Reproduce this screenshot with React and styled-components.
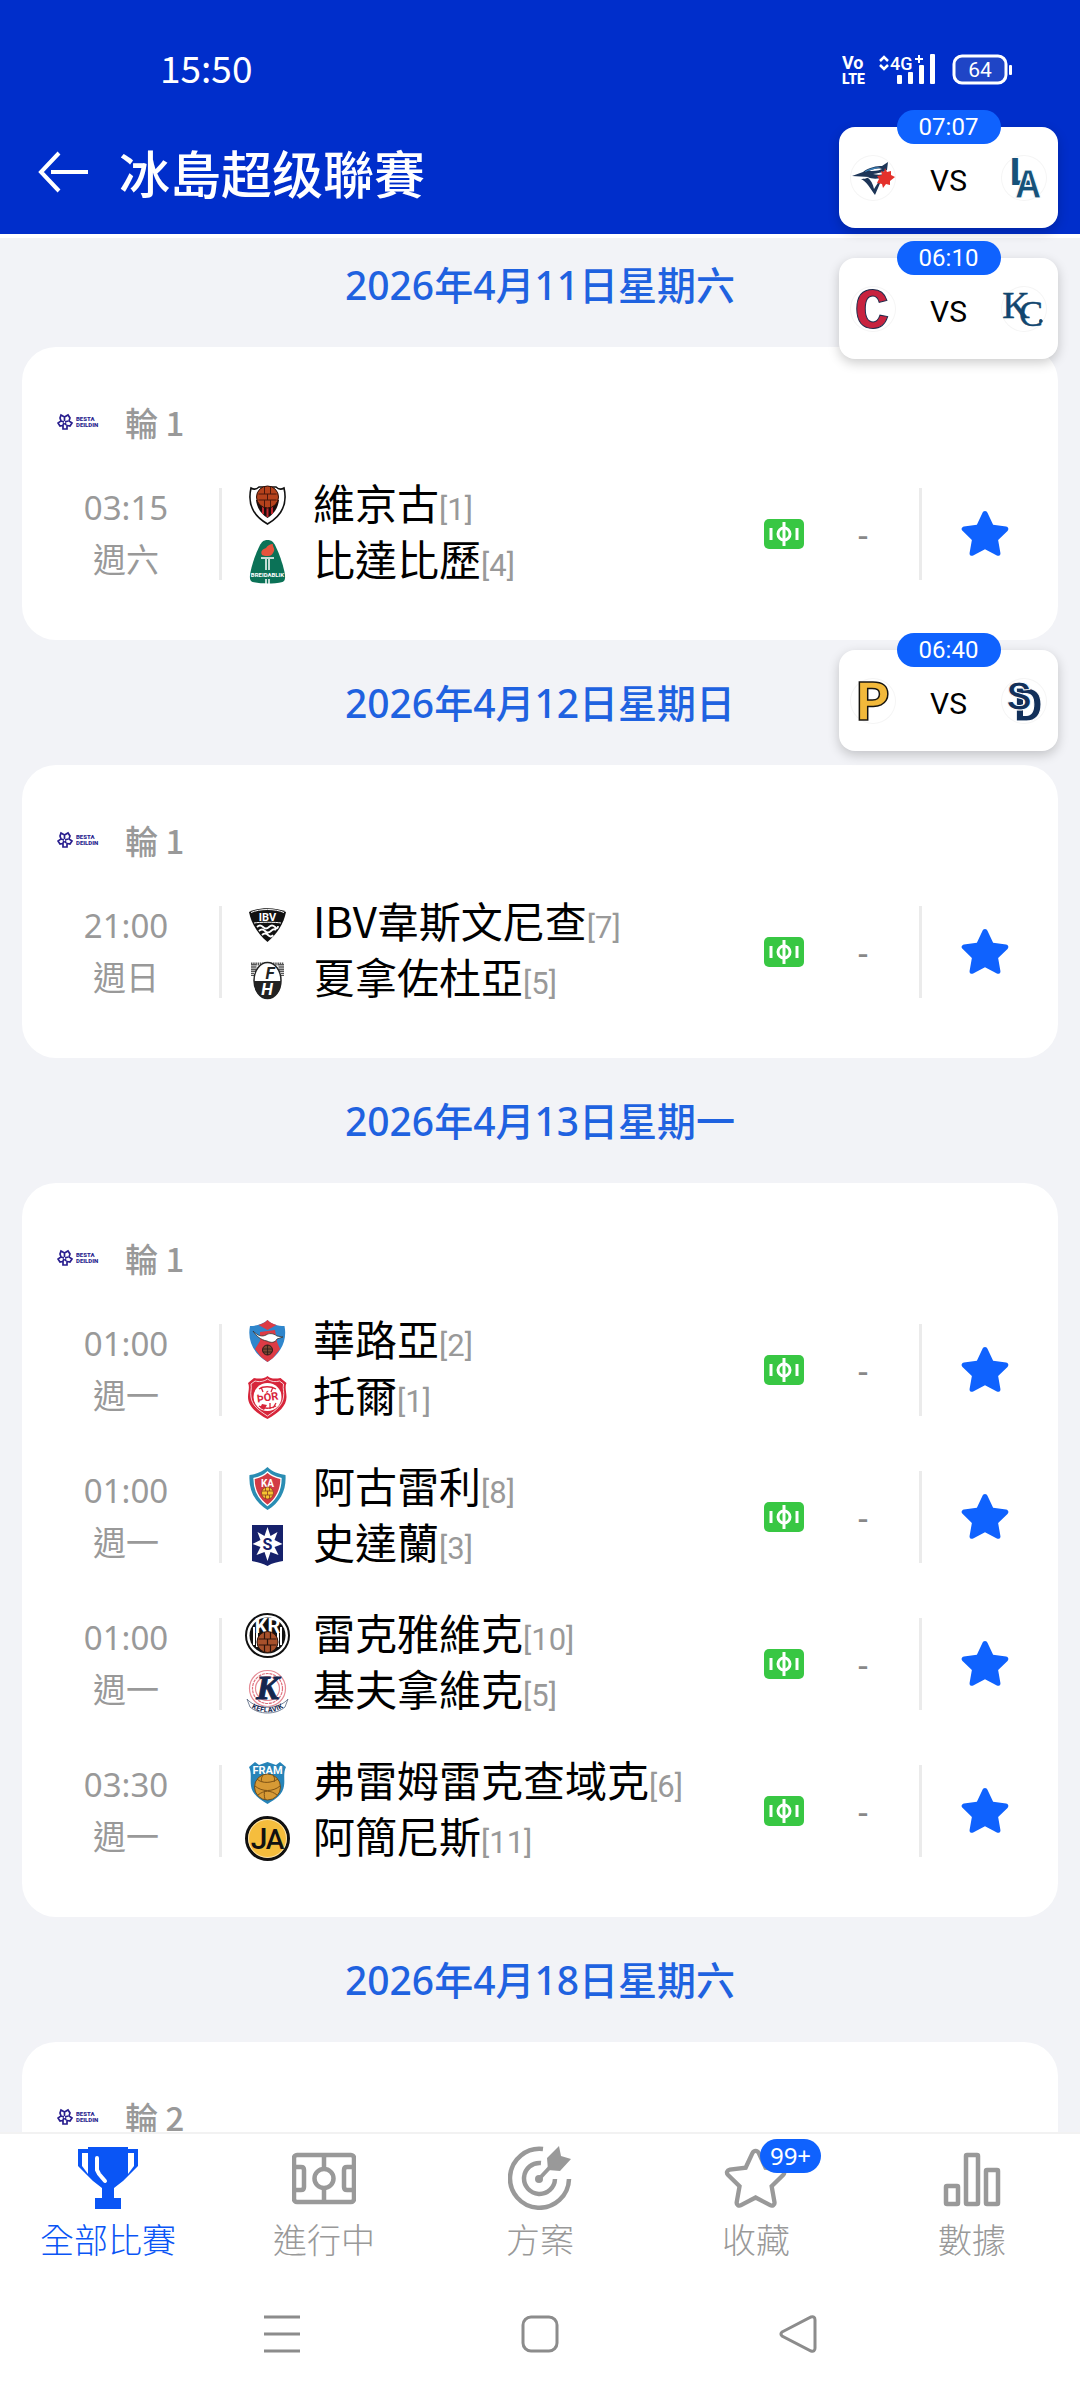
import React from "react";
import styled, { createGlobalStyle } from "styled-components";

const BALL_PANELS = "M-9 -3H9M-9 3H9M-3 -10V-3M3 -10V-3M0 -3V3M-3 3V10M3 3V10";

const crests = {
  vikingur: (
    <>
      <path d="M6 5c3 2 6 1 8-1h17c2 2 5 3 8 1 3 13 1 26-16.500 36C5 31 3 18 6 5z" fill="#fff" stroke="#111" strokeWidth="1.600" />
      <path d="M11 17h23c-1 8-5 14-11.500 18C16 31 12 25 11 17z" fill="#1a0d0d" />
      <path d="M18 20v11M22.500 20v14M27 20v11" stroke="#c0272d" strokeWidth="2" />
      <circle cx="22.500" cy="14" r="11" fill="#b5421c" stroke="#2b0f08" strokeWidth="1" />
      <path d={BALL_PANELS} transform="translate(22.5 14)" fill="none" stroke="#4a170b" strokeWidth="1" />
    </>
  ),
  breidablik: (
    <>
      <path d="M22.500 1c4 0 6 2 8 6 4 8 7 17 9 26 1 5 1 9-2 10-9 2-21 2-30 0-3-1-3-5-2-10 2-9 5-18 9-26 2-4 4-6 8-6z" fill="#0b7257" />
      <path d="M17 16c-2-4 1-6 4-7 1-2 4-4 7-4-1 2 2 4 1 7-1 3-3 5-6 5-2 0-4 0-6-1z" fill="#e5533d" />
      <path d="M16 19h13M21 20v11M24 20v11M21 40v5M24 40v5" stroke="#fff" strokeWidth="1.500" />
      <text x="22.500" y="38" textAnchor="middle" fontSize="6" fontWeight="700" fill="#fff">BREIDABLIK</text>
    </>
  ),
  ibv: (
    <>
      <path d="M4 11c10-5 27-5 37 0-2 11-9 22-18.500 30C13 33 6 22 4 11z" fill="#111" />
      <path d="M6 11.500c9-4 24-4 33 0M9 22c5-1 22-1 27 0" fill="none" stroke="#fff" strokeWidth="1" />
      <text x="22.500" y="19.500" textAnchor="middle" fontSize="11" fontWeight="700" fill="#fff">IBV</text>
      <path d="M12 26q3-3 6 0t6 0 6 0 3-1M14 30q3-3 6 0t6 0 5-1M17 34q3-3 6 0t5 0" fill="none" stroke="#fff" strokeWidth="1.800" />
    </>
  ),
  fh: (
    <>
      <path d="M6 7h33M7.500 7v12M37.500 7v12M10 7v8M35 7v8" stroke="#555" strokeWidth="3" strokeDasharray="1.500 0.700" />
      <ellipse cx="22.500" cy="23.500" rx="13.500" ry="18" fill="#fff" stroke="#222" strokeWidth="1.500" />
      <path d="M9 24h27c0 10-6 17.500-13.500 17.500S9 34 9 24z" fill="#222" />
      <text x="25" y="22" textAnchor="middle" fontSize="17" fontWeight="700" fontStyle="italic" fill="#222">F</text>
      <text x="22" y="38" textAnchor="middle" fontSize="17" fontWeight="700" fontStyle="italic" fill="#fff">H</text>
    </>
  ),
  valur: (
    <>
      <path d="M22.500 1c4 4 10 6 17 6 3 15-4 28-17 36C9 35 2 22 5 7c7 0 13-2 17.500-6z" fill="#2f86cc" />
      <path d="M22.500 1c3 3 6 4 9 5l-9 5-9-5c3-1 6-2 9-5zM15 13l15-2 2 12 3 7-7 9-5.500 4L16 38l-6-8 5-8z" fill="#dd3b45" />
      <path d="M8 12c5 5 9 6 13 4 3-2 7-2 11 1l6 1-6 2c-2 4-6 4-10 2-6-1-11-5-14-10z" fill="#fff" stroke="#333" strokeWidth="0.800" />
      <circle cx="22.500" cy="31" r="5" fill="#7b4a32" stroke="#2c1a1a" strokeWidth="1" />
      <path d="M18 30h9M18 33h9M22.500 26v10" stroke="#2c1a1a" strokeWidth="0.800" />
    </>
  ),
  thor: (
    <>
      <path d="M22.500 1c3 3 8 3 13 2l6 5c-2 4 0 9 0 14 0 9-8 16-19 22C11 38 3 31 3 22c0-5 2-10 0-14l6-5c5 1 10 1 13.500-2z" fill="#d7253a" />
      <path d="M22.500 4c4 3 8 3 12 2l4 3c-1 5 1 8 0 13-1 8-7 13-16 19C13 35 7 30 6 22c-1-5 1-8 0-13l4-3c4 1 8 1 12.500-2z" fill="none" stroke="#fff" strokeWidth="0.800" />
      <circle cx="22.500" cy="22" r="14" fill="#fff" />
      <path d="M14 14c4-3 12-3 17 0M16 12l2 5M28 12l-2 5M14 31c4 3 12 3 17 0M25 28v6M31 28l-3 5" fill="none" stroke="#d7253a" strokeWidth="1.300" />
      <text x="22.500" y="26" textAnchor="middle" fontSize="11" fontWeight="700" fill="#d7253a" transform="rotate(-8 22.5 22)">ÞÓR</text>
      <path d="M17 29l5 1-3 5-4-2z" fill="#d7253a" />
    </>
  ),
  ka: (
    <>
      <path d="M22.500 1c5 5 11 7 18 8 1 15-5 27-18 35C9.500 36 3.500 24 4.500 9c7-1 13-3 18-8z" fill="#2a8db3" />
      <path d="M22.500 6c4 4 9 5.500 13.500 6.500 0 12-4 20-13.500 27C13 32.500 9 24.500 9 12.500 13.500 11.500 18.500 10 22.500 6z" fill="#d23b45" stroke="#fff" strokeWidth="1.300" />
      <text x="22.500" y="20.500" textAnchor="middle" fontSize="10" fontWeight="700" fill="#fff">KA</text>
      <circle cx="22.500" cy="27" r="6" fill="#f6c531" stroke="#8c3d20" strokeWidth="0.800" />
      <path d="M17 25h11M17 29h11M20.500 21v4M24.500 21v4M22.500 25v4M20.500 29v4M24.500 29v4" stroke="#8c3d20" strokeWidth="0.800" />
    </>
  ),
  stjarnan: (
    <>
      <path d="M7 3h31v36c-5 1-11 2-15.500 5C18 41 12 40 7 39z" fill="#16216b" />
      <path d="M22.500 5l3 9 7-4-3 8 8 4-8 3 4 8-8-3-3 9-3-9-8 3 4-8-8-3 8-4-3-8 7 4z" fill="#fff" />
      <text x="22.500" y="28" textAnchor="middle" fontSize="16" fontWeight="700" fill="#16216b">S</text>
    </>
  ),
  kr: (
    <>
      <circle cx="22.500" cy="22.500" r="21.500" fill="#fff" stroke="#111" strokeWidth="2" />
      <circle cx="22.500" cy="22.500" r="18" fill="#111" />
      <path d="M9 14v18M36 14v18M12 20v14M33 20v14" stroke="#fff" strokeWidth="2" />
      <text x="22.500" y="20" textAnchor="middle" fontSize="20" fontWeight="700" fill="#fff">KR</text>
      <circle cx="22.500" cy="29" r="10.500" fill="#a8512b" stroke="#2c130a" strokeWidth="1" />
      <path d={BALL_PANELS} transform="translate(22.5 29)" fill="none" stroke="#2c130a" strokeWidth="1.200" />
    </>
  ),
  keflavik: (
    <>
      <circle cx="22.500" cy="19.500" r="18" fill="#fff" stroke="#e58b95" strokeWidth="1.200" />
      <circle cx="22.500" cy="19.500" r="15" fill="none" stroke="#e0707d" strokeWidth="1.200" strokeDasharray="3 0.800" />
      <circle cx="22.500" cy="19.500" r="12" fill="none" stroke="#e58b95" strokeWidth="1.200" />
      <text x="22.500" y="30" textAnchor="middle" fontFamily="Liberation Serif" fontSize="34" fontWeight="700" fontStyle="italic" fill="#14274f" stroke="#14274f">K</text>
      <path id="kefBand" d="M3 33c10 11 29 11 39 0" fill="none" stroke="#fff" strokeWidth="7" />
      <path d="M2 30c9 11 32 11 41 0M5 38c9 8 26 8 35 0M2 30l3 8M43 30l-3 8" fill="none" stroke="#56647f" strokeWidth="0.800" />
      <text fontSize="7" fontWeight="700" fill="#14274f">
        <textPath href="#kefBand" startOffset="50%" textAnchor="middle" dominantBaseline="central">KEFLAVIK</textPath>
      </text>
    </>
  ),
  fram: (
    <>
      <path d="M4 7l6-5 4 3 8.500-3L31 5l4-3 6 5c-3 6-1 12-2 19-1 8-8 13-16.500 18C14 39 7 34 6 26 5 19 7 13 4 7z" fill="#2784b8" />
      <text x="22.500" y="14" textAnchor="middle" fontSize="11" fontWeight="700" fill="#fff">FRAM</text>
      <circle cx="22.500" cy="27" r="13" fill="#d79a35" stroke="#5e3c10" strokeWidth="0.800" />
      <path d="M12 19c5 5 15 4 21 0M10 26c7 6 18 6 25 0M13 35c6-5 13-5 19 0M18 15c-2 3-2 5-1 7M28 15c2 3 2 5 1 7M20 30c-1 3-1 6 0 9" fill="none" stroke="#7d5215" strokeWidth="1" />
    </>
  ),
  akranes: (
    <>
      <circle cx="22.500" cy="22.500" r="21" fill="#f5bd3d" stroke="#111" strokeWidth="3" />
      <circle cx="22.500" cy="22.500" r="19" fill="none" stroke="#fff" strokeWidth="0.600" />
      <text x="14" y="33" textAnchor="middle" fontSize="30" fontWeight="500" fill="#111">J</text>
      <text x="30" y="33" textAnchor="middle" fontSize="28" fontWeight="500" fill="#111">A</text>
    </>
  ),
};

const clubs = {
  jays: (
    <>
      <path d="M1 20l11-4c6-5 14-6 19-6l6-4-1 8c-5 3-9 3-14 4 4 1 8 1 11 0l-3 7c-2 5-4 9-6 14-5-7-8-13-14-16 3 0 7-1 8-2L1 20z" fill="#1d3557" />
      <path d="M18 15c4-2 8-3 13-2-4 2-9 2-13 2zM16 21c5 2 9 2 14 1l-7 11c-1-5-3-9-7-12z" fill="#fff" />
      <path d="M13 16c5-4 12-5 17-5-5 2-11 3-17 5z" fill="#3c82b8" />
      <path d="M34 12l2 4 4-1v4l4 2-5 4v4l-4-1-3 4-1-4-5-1 2-4-2-3 5-1-1-4 3 1z" fill="#e4312b" />
    </>
  ),
  dodgers: (
    <g fill="#17527a" stroke="#17527a" fontFamily="Liberation Mono" fontWeight="700">
      <text x="18" y="29" textAnchor="middle" fontSize="40" strokeWidth="0">L</text>
      <text x="26" y="42" textAnchor="middle" fontSize="42" stroke="#fff" strokeWidth="1">A</text>
    </g>
  ),
  guardians: (
    <text x="21" y="41" textAnchor="middle" fontFamily="Liberation Mono" fontSize="58" fontWeight="700" fill="#c8233f" stroke="#1b2c4c" strokeWidth="1">C</text>
  ),
  royals: (
    <g fill="#12466f" stroke="#12466f" strokeWidth="0.500" fontFamily="Liberation Serif">
      <text x="14" y="31" textAnchor="middle" fontSize="38">K</text>
      <text x="29" y="39" textAnchor="middle" fontSize="36">C</text>
      <circle cx="39" cy="34" r="1.500" />
    </g>
  ),
  pirates: (
    <text x="22" y="41" textAnchor="middle" fontFamily="Liberation Mono" fontSize="58" fontWeight="700" fill="#f2b93b" stroke="#15130f" strokeWidth="1.500">P</text>
  ),
  padres: (
    <g fill="#12305a" fontFamily="Liberation Mono" fontWeight="700">
      <text x="26" y="42" textAnchor="middle" fontSize="50" stroke="#fff" strokeWidth="1">D</text>
      <text x="17" y="31" textAnchor="middle" fontSize="42" stroke="#fff" strokeWidth="1">S</text>
    </g>
  ),
};

const STAR = "M12 1.500c.6 0 1 .4 1.300 1l2.600 5.600 6.200.8c1.100.2 1.500 1.300.7 2.100l-4.500 4.400 1.100 6.200c.2 1.100-.8 1.700-1.700 1.200L12 19.800l-5.700 3c-.9.500-1.900-.1-1.700-1.200l1.100-6.200-4.500-4.400c-.8-.8-.4-1.900.7-2.100l6.200-.8 2.600-5.600c.3-.6.7-1 1.300-1z";

const tabs = [
  {
    label: "全部比賽",
    active: true,
    icon: (
      <>
        <path d="M12 1h40v2h10v17L47 35l-9 7v10h7v11H19V52h7V42l-9-7L2 20V3h10z" fill="currentColor" />
        <path d="M6 7h6v21l-6-8zM52 7h6v13l-6 8z" fill="#fff" />
        <path d="M21 12v12l2 4 6 7" fill="none" stroke="#fff" strokeWidth="4" strokeLinecap="round" />
      </>
    ),
  },
  {
    label: "進行中",
    icon: (
      <g fill="none" stroke="currentColor" strokeWidth="4.500">
        <rect x="2" y="9" width="60" height="47" rx="3" />
        <path d="M32 9v14M32 42v14M4 21h5q3 0 3 3v17q0 3-3 3H4M60 21h-5q-3 0-3 3v17q0 3 3 3h5" />
        <circle cx="32" cy="32.500" r="9.500" />
      </g>
    ),
  },
  {
    label: "方案",
    icon: (
      <>
        <path d="M35 3A29.500 29.500 0 1 0 61 33M33 17A15.500 15.500 0 1 0 47 33" fill="none" stroke="currentColor" strokeWidth="4.500" />
        <circle cx="31" cy="33" r="4" fill="currentColor" />
        <path d="M31 33l13-14" stroke="currentColor" strokeWidth="4" />
        <path d="M39 12L51 0l2 10 10 3-11 12-12-1z" fill="currentColor" />
      </>
    ),
  },
  {
    label: "收藏",
    badge: "99+",
    icon: <path d={STAR} transform="translate(1 1) scale(2.550)" fill="none" stroke="currentColor" strokeWidth="1.700" />,
  },
  {
    label: "數據",
    icon: (
      <g fill="none" stroke="currentColor" strokeWidth="4.500">
        <rect x="6" y="40" width="12" height="18" rx="1" />
        <rect x="26" y="9" width="12" height="49" rx="1" />
        <rect x="46" y="24" width="12" height="34" rx="1" />
      </g>
    ),
  },
];

const days = [
  {
    date: "2026年4月11日星期六",
    round: "輪 1",
    matches: [
      { time: "03:15", day: "週六", home: ["vikingur", "維京古", 1], away: ["breidablik", "比達比歷", 4] },
    ],
  },
  {
    date: "2026年4月12日星期日",
    round: "輪 1",
    matches: [
      { time: "21:00", day: "週日", home: ["ibv", "IBV韋斯文尼查", 7], away: ["fh", "夏拿佐杜亞", 5] },
    ],
  },
  {
    date: "2026年4月13日星期一",
    round: "輪 1",
    matches: [
      { time: "01:00", day: "週一", home: ["valur", "華路亞", 2], away: ["thor", "托爾", 1] },
      { time: "01:00", day: "週一", home: ["ka", "阿古雷利", 8], away: ["stjarnan", "史達蘭", 3] },
      { time: "01:00", day: "週一", home: ["kr", "雷克雅維克", 10], away: ["keflavik", "基夫拿維克", 5] },
      { time: "03:30", day: "週一", home: ["fram", "弗雷姆雷克查域克", 6], away: ["akranes", "阿簡尼斯", 11] },
    ],
  },
  { date: "2026年4月18日星期六", round: "輪 2", matches: [] },
];

const pinned = [
  { time: "07:07", home: "jays", away: "dodgers", top: 110 },
  { time: "06:10", home: "guardians", away: "royals", top: 241 },
  { time: "06:40", home: "pirates", away: "padres", top: 633 },
];

const LeagueLogo = () => (
  <svg width="46" height="18" viewBox="0 0 46 18" aria-hidden="true">
    <g fill="none" stroke="#2a1f8f" strokeWidth="1.700">
      <path d="M4 2l3.500 2L11 2l2 3-1 3 3 2-2 3-3-.500V16H6v-3.500L3 13l-2-3 3-2-1-3zM7.500 4v4M4 8l3 1M11 8L8 9M6 12l1-2M9 12L8 10" />
    </g>
    <text x="19" y="8" fontSize="6" fontWeight="900" fill="#2a1f8f">BESTA</text>
    <text x="19" y="14" fontSize="6" fontWeight="900" fill="#2a1f8f">DEILDIN</text>
  </svg>
);

const Team = ({ team: [crest, name, rank] }) => (
  <TeamLine>
    <svg width="45" height="45" viewBox="0 0 45 45" aria-hidden="true">{crests[crest]}</svg>
    <TeamName>
      {name}
      <Rank>[{rank}]</Rank>
    </TeamName>
  </TeamLine>
);

const Match = ({ match }) => (
  <MatchRow>
    <Kickoff>
      <span>{match.time}</span>
      <span>{match.day}</span>
    </Kickoff>
    <Divider />
    <Teams>
      <Team team={match.home} />
      <Team team={match.away} />
    </Teams>
    <svg width="40" height="30" viewBox="0 0 40 30" aria-hidden="true">
      <rect width="40" height="30" rx="5" fill="#38c743" />
      <g fill="none" stroke="#fff" strokeWidth="3">
        <path d="M7 9v12M33 9v12M20 3v24" />
        <circle cx="20" cy="15" r="6" />
      </g>
    </svg>
    <Score>-</Score>
    <Divider />
    <StarButton type="button" aria-label="收藏">
      <svg width="50" height="50" viewBox="0 0.500 24 24"><path d={STAR} fill="#0f62fe" /></svg>
    </StarButton>
  </MatchRow>
);

const App = () => {
  return (
    <>
      <GlobalStyle />
      <Screen>
        <Header>
          <StatusBar>
            <Clock>15:50</Clock>
            <svg width="170" height="34" viewBox="0 0 170 34" aria-hidden="true">
              <g fill="#fff" fontFamily="Roboto">
                <text x="0" y="16" fontSize="18" fontWeight="700">Vo</text>
                <text x="0" y="31" fontSize="14" fontWeight="900">LTE</text>
                <text x="48" y="17" fontSize="18" fontWeight="500">4G</text>
                <path d="M77 2v8M73 6h8" stroke="#fff" strokeWidth="2" />
                <path d="M38 8l4-4 4 4M38 12l4 4 4-4" fill="none" stroke="#fff" strokeWidth="2.500" />
                <rect x="55" y="22" width="5" height="9" rx="1" />
                <rect x="66" y="19" width="5" height="12" rx="1" />
                <rect x="77" y="12" width="5" height="19" rx="1" />
                <rect x="88" y="1" width="5" height="30" rx="1" />
                <rect x="112" y="3" width="52" height="27" rx="8" fill="#1f45c6" stroke="#fff" strokeWidth="3" />
                <rect x="167" y="12" width="3" height="10" rx="1" />
                <text x="138" y="24" textAnchor="middle" fontSize="21">64</text>
              </g>
            </svg>
          </StatusBar>
          <TitleBar>
            <BackButton type="button" aria-label="返回">
              <svg width="52" height="42" viewBox="0 0 52 42" fill="none" stroke="#fff" strokeWidth="4">
                <path d="M22 2L4 21l18 19M14 21h37" />
              </svg>
            </BackButton>
            <Title>冰島超级聯賽</Title>
          </TitleBar>
        </Header>

        <MatchList>
          {days.map((day) => (
            <section key={day.date}>
              <DateHeading>{day.date}</DateHeading>
              <Card>
                <Round>
                  <LeagueLogo />
                  {day.round}
                </Round>
                {day.matches.map((match) => (
                  <Match key={match.home[0]} match={match} />
                ))}
              </Card>
            </section>
          ))}
        </MatchList>

        {pinned.map((game) => (
          <PinnedGame key={game.time} $top={game.top}>
            <PinnedTime>{game.time}</PinnedTime>
            <PinnedTeams>
              <ClubLogo viewBox="0 0 44 44">{clubs[game.home]}</ClubLogo>
              <Versus>VS</Versus>
              <ClubLogo viewBox="0 0 44 44">{clubs[game.away]}</ClubLogo>
            </PinnedTeams>
          </PinnedGame>
        ))}

        <TabBar>
          {tabs.map((tab) => (
            <Tab key={tab.label} type="button" $active={tab.active}>
              <TabIcon>
                <svg width="64" height="64" viewBox="0 0 64 64" aria-hidden="true">{tab.icon}</svg>
                {tab.badge && <Badge>{tab.badge}</Badge>}
              </TabIcon>
              {tab.label}
            </Tab>
          ))}
        </TabBar>

        <SystemNav>
          <SystemButton type="button" aria-label="選單">
            <svg width="40" height="40" viewBox="0 0 40 40"><path d="M2 3h36M2 20h36M2 37h36" /></svg>
          </SystemButton>
          <SystemButton type="button" aria-label="主畫面">
            <svg width="40" height="40" viewBox="0 0 40 40"><rect x="3" y="3" width="34" height="34" rx="8" /></svg>
          </SystemButton>
          <SystemButton type="button" aria-label="上一頁">
            <svg width="40" height="40" viewBox="0 0 40 40"><path d="M4 18L33 3q4-1 4 3v28q0 4-4 3L4 22q-2-2 0-4z" /></svg>
          </SystemButton>
        </SystemNav>
      </Screen>
    </>
  );
};

export default App;

// Styled Components
const GlobalStyle = createGlobalStyle`
  * {
    box-sizing: border-box;
  }

  body {
    margin: 0;
    font-family: "Noto Sans", "Noto Sans CJK TC", sans-serif;
    background: #f2f3f7;
  }

  button {
    padding: 0;
    border: none;
    background: none;
    font-family: inherit;
    cursor: pointer;
  }

  svg {
    display: block;
    flex-shrink: 0;
    font-family: Roboto, sans-serif;
  }
`;

const Screen = styled.div`
  position: relative;
  display: flex;
  flex-direction: column;
  height: 100vh;
  overflow: hidden;
`;

const Header = styled.header`
  flex-shrink: 0;
  background: #002ecb;
  border-bottom: 4px solid #fff;
  color: #fff;
`;

const StatusBar = styled.div`
  display: flex;
  align-items: flex-start;
  justify-content: space-between;
  padding: 53px 68px 23px 160px;
`;

const Clock = styled.span`
  font-family: "Noto Sans CJK TC", sans-serif;
  font-size: 37px;
  line-height: 28px;
`;

const TitleBar = styled.div`
  display: flex;
  align-items: center;
  gap: 30px;
  height: 124px;
  padding-left: 37px;
`;

const BackButton = styled.button`
  display: flex;
`;

const Title = styled.h1`
  margin: 0;
  font-family: "Noto Sans CJK TC", sans-serif;
  font-size: 51px;
  font-weight: 500;
  line-height: 64px;
`;

const MatchList = styled.main`
  flex: 1;
  min-height: 0;
  overflow: hidden;

  section:first-child h2 {
    padding-top: 21px;
  }
`;

const DateHeading = styled.h2`
  margin: 0;
  padding: 37px 0 36px;
  color: #1f62e0;
  font-size: 39px;
  font-weight: 500;
  line-height: 52px;
  text-align: center;
`;

const Card = styled.div`
  margin: 0 22px;
  padding-bottom: 33px;
  border-radius: 34px;
  background: #fff;
`;

const Round = styled.div`
  display: flex;
  align-items: center;
  gap: 22px;
  padding: 53px 35px 16px;
  color: #999;
  font-family: "Noto Sans CJK TC", sans-serif;
  font-size: 33px;
  font-weight: 500;
  line-height: 44px;
`;

const MatchRow = styled.div`
  display: flex;
  align-items: center;
  height: 147px;
  padding: 0 48px 0 34px;
`;

const Kickoff = styled.div`
  display: flex;
  flex-direction: column;
  width: 140px;
  color: #999;
  font-size: 33px;
  line-height: 52px;
  text-align: center;
`;

const Divider = styled.div`
  width: 3px;
  height: 92px;
  margin-left: 23px;
  background: #ebebeb;
`;

const Teams = styled.div`
  flex: 1;
  margin-left: 23px;
`;

const TeamLine = styled.div`
  display: flex;
  align-items: center;
  gap: 23px;
  height: 56px;
`;

const TeamName = styled.span`
  color: #000;
  font-family: "Noto Sans CJK TC", sans-serif;
  font-size: 42px;
  line-height: 56px;
  white-space: nowrap;
`;

const Rank = styled.span`
  color: #999;
  font-family: Roboto, sans-serif;
  font-size: 31px;
`;

const Score = styled.span`
  width: 92px;
  padding-left: 26px;
  color: #888;
  font-size: 34px;
  line-height: 52px;
  text-align: center;
`;

const StarButton = styled.button`
  display: flex;
  margin-left: 38px;
`;

const PinnedGame = styled.aside`
  position: absolute;
  top: ${(props) => props.$top}px;
  right: 22px;
  display: flex;
  flex-direction: column;
  align-items: center;
  width: 219px;
  font-family: Roboto, sans-serif;
`;

const PinnedTime = styled.div`
  z-index: 1;
  width: 104px;
  margin-bottom: -17px;
  border-radius: 17px;
  background: #0f62fe;
  color: #fff;
  font-size: 24px;
  line-height: 34px;
  text-align: center;
`;

const PinnedTeams = styled.div`
  display: flex;
  align-items: center;
  justify-content: space-between;
  width: 100%;
  height: 101px;
  padding: 0 12px;
  border-radius: 16px;
  background: #fff;
  box-shadow: 0 4px 12px rgba(0, 0, 0, 0.2);
`;

const Versus = styled.span`
  padding-top: 5px;
  color: #000;
  font-size: 30px;
`;

const ClubLogo = styled.svg`
  width: 44px;
  height: 44px;
  border-radius: 50%;
  box-shadow: 0 0 0 1px #f5f5f5;
  overflow: visible;
`;

const TabBar = styled.nav`
  display: flex;
  flex-shrink: 0;
  border-top: 2px solid #f2f2f2;
  background: #fff;
`;

const Tab = styled.button`
  display: flex;
  flex: 1;
  flex-direction: column;
  align-items: center;
  gap: 8px;
  height: 133px;
  padding-top: 12px;
  color: ${(props) => (props.$active ? "#0a55f5" : "#999")};
  font-size: 34px;
  font-weight: 300;
  line-height: 44px;
`;

const TabIcon = styled.span`
  position: relative;
`;

const Badge = styled.span`
  position: absolute;
  top: -7px;
  left: 36px;
  width: 61px;
  border-radius: 17px;
  background: #0f62fe;
  color: #fff;
  font-size: 24px;
  font-weight: 400;
  line-height: 34px;
  text-align: center;
`;

const SystemNav = styled.nav`
  display: flex;
  flex-shrink: 0;
  align-items: center;
  justify-content: center;
  gap: 218px;
  height: 133px;
  background: #fff;
`;

const SystemButton = styled.button`
  svg {
    fill: none;
    stroke: #8c8c8c;
    stroke-width: 3px;
  }
`;
